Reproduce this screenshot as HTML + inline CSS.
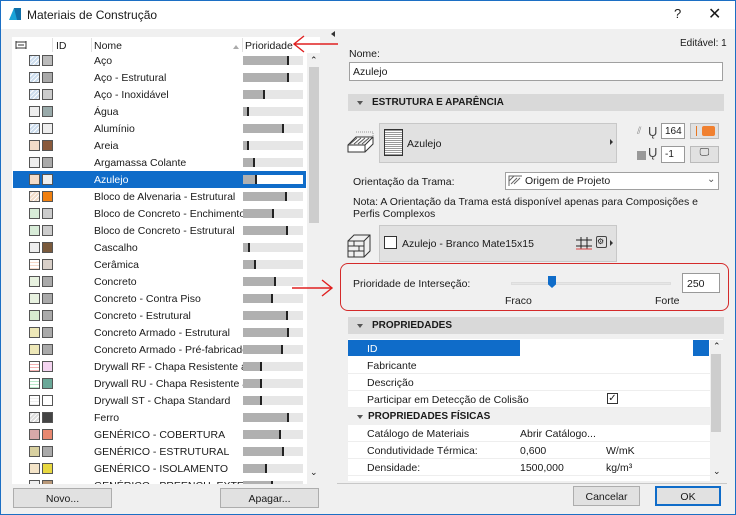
<!DOCTYPE html>
<html><head><meta charset="utf-8"><style>
*{margin:0;padding:0;box-sizing:border-box}
body{width:736px;height:515px;overflow:hidden;background:#f0f0f0;font-family:"Liberation Sans",sans-serif;font-size:10.5px;color:#1a1a1a;position:relative}
.a{position:absolute}
.win{position:absolute;left:0;top:0;width:736px;height:515px;border:1px solid #1c6fc4}
.row{position:absolute;left:13px;width:293px;height:17px}
.row .n{position:absolute;left:81px;top:3px;white-space:nowrap;width:150px;overflow:hidden}
.row .s1,.row .s2{position:absolute;top:3px;width:11px;height:11px;border:1px solid #555}
.row .s1{left:16px}.row .s2{left:29px}
.row .b{position:absolute;left:230px;top:4px;width:60px;height:9px;background:#e6e6e6}
.row .f{position:absolute;left:0;top:0;height:9px;background:#b0b0b0;border-right:2px solid #222}
.sel{background:#0f6cc9;color:#fff}
.sel .b{background:#fff}
.hdr{position:absolute;left:348px;width:376px;height:17px;background:#d9d9d9;font-weight:bold;font-size:10px;padding:3px 0 0 24px}
.hdr:before{content:"";position:absolute;left:9px;top:7px;border:3px solid transparent;border-top:4px solid #555}
.pr{position:absolute;left:348px;width:362px;height:17px;background:#fff;border-bottom:1px solid #eee;padding:3px 0 0 19px;white-space:nowrap}
.btn{position:absolute;background:#e1e1e1;border:1px solid #adadad;text-align:center;padding-top:4px}
</style></head><body>
<div class="win"></div>
<div class="a" style="left:1px;top:1px;width:734px;height:28px;background:#fff"></div>
<svg class="a" style="left:8px;top:7px" width="14" height="14"><path d="M1 13 L6 1 L13 1 L13 13 Z" fill="#1aa3d8"/><path d="M6 1 L9 13 L13 13 L13 1Z" fill="#0e6ea8"/></svg>
<div class="a" style="left:27px;top:8px;font-size:12px">Materiais de Construção</div>
<div class="a" style="left:674px;top:6px;font-size:13px">?</div>
<div class="a" style="left:708px;top:4px;font-size:16px">✕</div>
<div class="a" style="left:12px;top:37px;width:308px;height:447px;background:#fff"></div>
<svg class="a" style="left:15px;top:40px" width="12" height="10"><rect x="1" y="2" width="10" height="6" fill="none" stroke="#333"/><path d="M1 1v8M11 1v8M3 5h6" stroke="#333"/></svg>
<div class="a" style="left:56px;top:40px">ID</div>
<div class="a" style="left:52px;top:38px;width:1px;height:14px;background:#e0e0e0"></div>
<div class="a" style="left:91px;top:38px;width:1px;height:14px;background:#e0e0e0"></div>
<div class="a" style="left:94px;top:40px">Nome</div>
<div class="a" style="left:233px;top:45px;border:3px solid transparent;border-bottom:4px solid #aaa;border-top:0"></div>
<div class="a" style="left:242px;top:38px;width:1px;height:14px;background:#e0e0e0"></div>
<div class="a" style="left:245px;top:40px">Prioridade</div>
<div id="rows"></div>
<div class="a" style="left:307px;top:53px;width:13px;height:431px;background:#f0f0f0"></div>
<div class="a" style="left:309px;top:67px;width:10px;height:156px;background:#cdcdcd"></div>
<div class="a" style="left:310px;top:55px;font-size:9px">&#8963;</div>
<div class="a" style="left:310px;top:467px;font-size:9px">&#8964;</div>
<div class="btn" style="left:13px;top:488px;width:99px;height:20px">Novo...</div>
<div class="btn" style="left:220px;top:488px;width:99px;height:20px">Apagar...</div>
<div class="a" style="left:331px;top:31px;border:3px solid transparent;border-right:4px solid #333;border-left:0"></div>
<svg class="a" style="left:290px;top:33px" width="50" height="22"><path d="M48 11 H4 M14 3 L4 11 L14 19" stroke="#e02020" stroke-width="1.4" fill="none"/></svg>
<svg class="a" style="left:290px;top:277px" width="50" height="22"><path d="M2 11 H42 M32 3 L42 11 L32 19" stroke="#e02020" stroke-width="1.4" fill="none"/></svg>
<div class="a" style="left:680px;top:38px;font-size:10px">Editável: 1</div>
<div class="a" style="left:349px;top:48px">Nome:</div>
<div class="a" style="left:349px;top:62px;width:374px;height:19px;background:#fff;border:1px solid #a0a0a0;padding:3px 0 0 3px">Azulejo</div>
<div class="hdr" style="top:94px">ESTRUTURA E APARÊNCIA</div>
<svg class="a" style="left:346px;top:131px" width="30" height="26"><path d="M2 14 L10 6 L27 6 L27 13 L19 21 L2 21 Z M2 14 H19 L27 6 M19 14 V21" fill="#fff" stroke="#333"/><path d="M4 13 L11 7 M8 13 L15 7 M12 13 L19 7 M16 13 L23 7" stroke="#555"/><path d="M10 1 H27 V6" stroke="#999" stroke-dasharray="1 1" fill="none"/></svg>
<div class="a" style="left:379px;top:123px;width:238px;height:40px;background:#e1e1e1;border:1px solid #c8c8c8"></div>
<div class="a" style="left:384px;top:129px;width:19px;height:27px;border:1px solid #333;background:repeating-linear-gradient(0deg,#999 0 1px,#fff 1px 2px)"></div>
<div class="a" style="left:407px;top:138px">Azulejo</div>
<div class="a" style="left:610px;top:139px;border:3px solid transparent;border-left:3px solid #333;border-right:0"></div>
<div class="a" style="left:637px;top:126px;font-size:10px;color:#888">⫽</div>
<div class="a" style="left:648px;top:124px;font-size:13px;color:#444">Ų</div>
<div class="a" style="left:661px;top:123px;width:24px;height:16px;background:#fff;border:1px solid #999;padding:2px 0 0 3px;font-size:10px">164</div>
<div class="a" style="left:690px;top:123px;width:29px;height:16px;background:#e1e1e1;border:1px solid #bbb"></div>
<div class="a" style="left:696px;top:126px;width:1px;height:10px;background:#e87722"></div>
<div class="a" style="left:702px;top:126px;width:13px;height:10px;background:#f08030;border-radius:2px"></div>
<div class="a" style="left:637px;top:151px;width:9px;height:9px;background:#999"></div>
<div class="a" style="left:648px;top:145px;font-size:13px;color:#444">Ų</div>
<div class="a" style="left:661px;top:146px;width:24px;height:17px;background:#fff;border:1px solid #999;padding:2px 0 0 3px;font-size:10px">-1</div>
<div class="a" style="left:690px;top:146px;width:29px;height:17px;background:#e1e1e1;border:1px solid #bbb;text-align:center;font-size:10px">🖵</div>
<div class="a" style="left:353px;top:176px">Orientação da Trama:</div>
<div class="a" style="left:505px;top:172px;width:214px;height:18px;background:#fff;border:1px solid #a0a0a0"></div>
<svg class="a" style="left:508px;top:175px" width="15" height="12"><path d="M1 11 V1 H14 M3 9 L9 3 M6 9 L12 3 M1 6 L6 1" stroke="#666" fill="none"/></svg>
<div class="a" style="left:525px;top:175px">Origem de Projeto</div>
<div class="a" style="left:707px;top:174px;font-size:10px;color:#555">&#8964;</div>
<div class="a" style="left:353px;top:196px;width:360px;line-height:12px">Nota: A Orientação da Trama está disponível apenas para Composições e Perfis Complexos</div>
<svg class="a" style="left:346px;top:233px" width="26" height="26"><path d="M2 8 H18 V24 H2 Z M2 8 L8 2 H24 V18 L18 24 M18 8 L24 2 M2 13 H18 M2 18 H18 M8 8 V13 M13 13 V18 M8 18 V24" fill="none" stroke="#333"/></svg>
<div class="a" style="left:379px;top:225px;width:238px;height:37px;background:#e1e1e1;border:1px solid #c8c8c8"></div>
<div class="a" style="left:384px;top:236px;width:13px;height:13px;border:1px solid #333;background:#fff"></div>
<div class="a" style="left:402px;top:238px">Azulejo - Branco Mate15x15</div>
<svg class="a" style="left:575px;top:236px" width="18" height="14"><path d="M1 4 H17 M1 10 H17 M6 1 V13 M12 1 V13" stroke="#222"/><path d="M1 13 H17" stroke="#d44"/></svg>
<div class="a" style="left:596px;top:236px;width:11px;height:12px;border:1px solid #444;border-radius:2px;font-size:8px">⚙</div>
<div class="a" style="left:610px;top:240px;border:3px solid transparent;border-left:3px solid #333;border-right:0"></div>
<div class="a" style="left:340px;top:263px;width:389px;height:48px;border:1.5px solid #d42a2a;border-radius:8px"></div>
<div class="a" style="left:353px;top:278px">Prioridade de Interseção:</div>
<div class="a" style="left:511px;top:282px;width:160px;height:3px;background:#e6e6e6;border:1px solid #ddd"></div>
<div class="a" style="left:548px;top:276px;width:8px;height:12px;background:#0f6cc9;clip-path:polygon(0 0,100% 0,100% 70%,50% 100%,0 70%)"></div>
<div class="a" style="left:682px;top:273px;width:38px;height:20px;background:#fff;border:1px solid #999;padding:4px 0 0 4px">250</div>
<div class="a" style="left:505px;top:295px">Fraco</div>
<div class="a" style="left:655px;top:295px">Forte</div>
<div class="hdr" style="top:317px">PROPRIEDADES</div>
<div class="a" style="left:348px;top:339px;width:375px;height:142px;background:#fff"></div>
<div class="a" style="left:348px;top:340px;width:172px;height:16px;background:#0f6cc9;color:#fff;padding:3px 0 0 19px">ID</div>
<div class="a" style="left:693px;top:340px;width:16px;height:16px;background:#0f6cc9"></div>
<div class="pr" style="top:357px">Fabricante</div>
<div class="pr" style="top:374px">Descrição</div>
<div class="pr" style="top:391px">Participar em Detecção de Colisão</div>
<div class="a" style="left:607px;top:393px;width:11px;height:11px;border:1px solid #333;font-size:10px;line-height:10px;text-align:center">✓</div>
<div class="a" style="left:348px;top:408px;width:362px;height:17px;background:#f0f0f0;font-weight:bold;font-size:10px;padding:3px 0 0 20px">PROPRIEDADES FÍSICAS</div>
<div class="a" style="left:357px;top:415px;border:3px solid transparent;border-top:4px solid #555"></div>
<div class="pr" style="top:425px">Catálogo de Materiais<span class="a" style="left:172px;top:3px">Abrir Catálogo...</span></div>
<div class="pr" style="top:442px">Condutividade Térmica:<span class="a" style="left:172px;top:3px">0,600</span><span class="a" style="left:258px;top:3px">W/mK</span></div>
<div class="pr" style="top:459px">Densidade:<span class="a" style="left:172px;top:3px">1500,000</span><span class="a" style="left:258px;top:3px">kg/m³</span></div>
<div class="a" style="left:710px;top:340px;width:13px;height:141px;background:#f0f0f0"></div>
<div class="a" style="left:711px;top:354px;width:10px;height:78px;background:#cdcdcd"></div>
<div class="a" style="left:713px;top:341px;font-size:9px">&#8963;</div>
<div class="a" style="left:713px;top:466px;font-size:9px">&#8964;</div>
<div class="a" style="left:337px;top:483px;width:390px;height:1px;background:#c8c8c8"></div>
<div class="btn" style="left:573px;top:486px;width:67px;height:20px">Cancelar</div>
<div class="btn" style="left:655px;top:486px;width:66px;height:20px;border:2px solid #0f6cc9;padding-top:3px">OK</div>
<script>
var d=[["Aço","#cde","#bbb",46,"d"],["Aço - Estrutural","#cde","#aaa",46,"d"],["Aço - Inoxidável","#cde","#ccc",22,"d"],["Água","#eee","#9aa",6,""],["Alumínio","#cde","#eee",41,"d"],["Areia","#f3dcc8","#8a5a3c",6,"p"],["Argamassa Colante","#eee","#aaa",12,"p"],["Azulejo","#f3dcc8","#eee",14,"p"],["Bloco de Alvenaria - Estrutural","#f3dcc8","#f08010",44,"d"],["Bloco de Concreto - Enchimento","#d8ecd8","#ccc",31,"x"],["Bloco de Concreto - Estrutural","#d8ecd8","#ccc",45,"x"],["Cascalho","#eee","#7a5a3c",7,"p"],["Cerâmica","#f6d8c8","#d8cfc8",13,"g"],["Concreto","#e8f2e0","#aaa",33,"p"],["Concreto - Contra Piso","#e8f2e0","#aaa",30,"p"],["Concreto - Estrutural","#d8ecd0","#aaa",45,"x"],["Concreto Armado - Estrutural","#eee8b8","#aaa",46,"x"],["Concreto Armado - Pré-fabricado","#eee8b8","#aaa",40,"x"],["Drywall RF - Chapa Resistente ao Fogo","#f4b0b0","#f4d4f0",19,"g"],["Drywall RU - Chapa Resistente à Umidade","#b8e8c8","#6aa898",19,"g"],["Drywall ST - Chapa Standard","#eee","#fff",19,"g"],["Ferro","#ddd","#444",46,"d"],["GENÉRICO - COBERTURA","#d8a8a8","#e88870",38,""],["GENÉRICO - ESTRUTURAL","#d8d0a0","#aaa",41,""],["GENÉRICO - ISOLAMENTO","#f4e4c8","#e8d840",24,""],["GENÉRICO - PREENCH. EXTERNO","#eee","#b89878",30,""]];
var h="";d.forEach(function(r,i){var t=52+17*i;if(t>482)return;var pat=r[4]=="d"?"repeating-linear-gradient(135deg,"+r[1]+" 0 2px,#fff 2px 3px)":r[4]=="g"?"repeating-linear-gradient(0deg,"+r[1]+" 0 1px,#fff 1px 3px)":r[1];var hh=Math.min(17,484-t);h+='<div class="row'+(r[0]=="Azulejo"?" sel":"")+'" style="top:'+t+'px;height:'+hh+'px;overflow:hidden"><span class="s1" style="background:'+pat+'"></span><span class="s2" style="background:'+r[2]+'"></span><span class="n">'+r[0]+'</span><span class="b"><span class="f" style="width:'+r[3]+'px"></span></span></div>';});
document.getElementById("rows").innerHTML=h;
</script>
</body></html>
